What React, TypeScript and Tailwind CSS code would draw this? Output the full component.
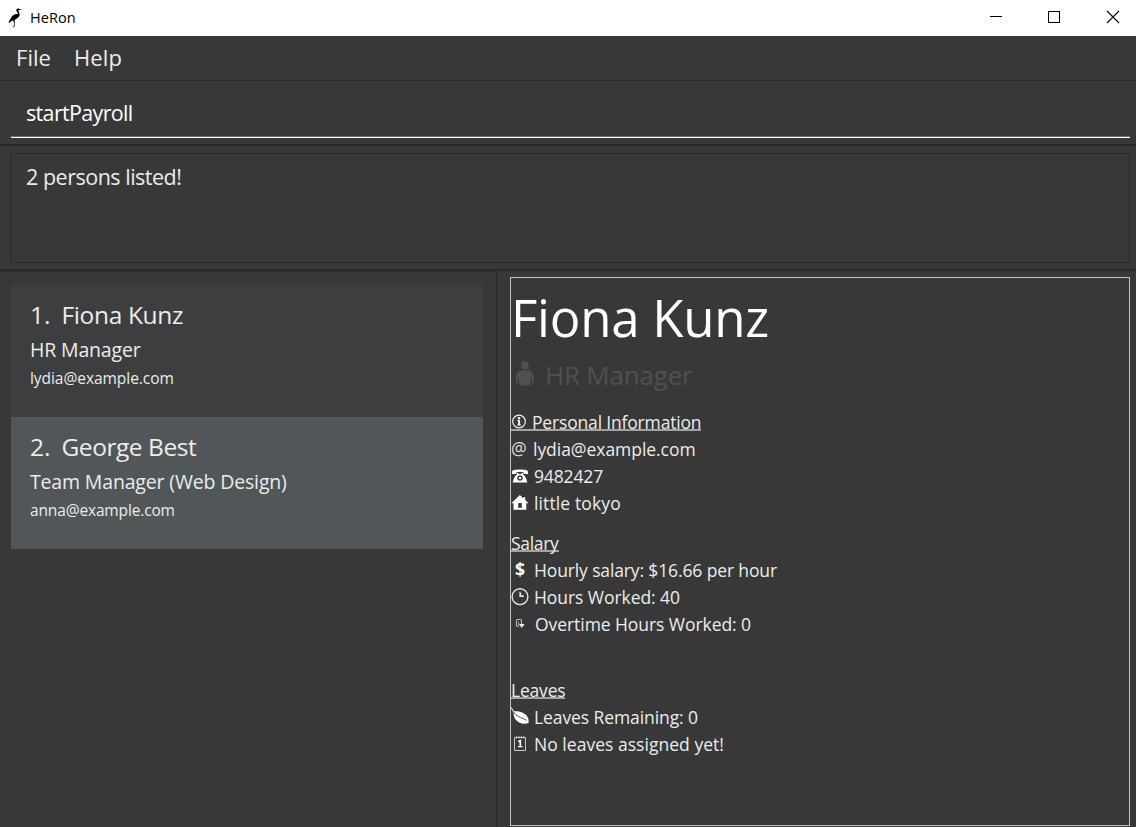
import type { ReactNode } from "react";

function HeronLogo() {
  return (
    <svg width="15" height="20" viewBox="0 0 15 20" className="shrink-0">
      <path
        d="M8.3 2.1 C8.6 0.6 10.4 0.2 11.4 1 L14.2 1.9 L11.3 2.1 C10.2 2.2 10.3 3.2 10.9 4.2 C11.9 6 11.9 7.6 10.6 9 C9.3 10.4 7.6 11.4 6.4 12 L3.6 13 L0.6 15.2 L0.9 13.4 L2.4 11 C3.5 8.6 5.2 6.6 7.6 6 C9 5.7 9.8 6.4 9.9 5.6 C10 4.6 8 3.8 8.3 2.1 Z"
        fill="#000"
      />
      <path d="M6.6 11.4 L6.3 18.6 M6.2 18.6 L4.6 18.9 M5.2 11.8 L6.4 14.4" stroke="#222" strokeWidth="0.9" fill="none" />
    </svg>
  );
}

function PersonIcon() {
  return (
    <svg width="20" height="26" viewBox="0 0 20 26" fill="#505050" className="shrink-0">
      <circle cx="10" cy="4.5" r="3.9" />
      <path d="M5.6 9.6 H14.2 C17.4 10 18.9 13.5 19.2 20.6 Q19 22.6 17.3 22.2 L16.2 17 L15.8 23 Q15.6 24.6 14 24.6 H6 Q4.4 24.6 4.2 23 L3.6 17 L2.6 22.2 Q0.8 22.6 0.7 20.6 C1 13.5 2.4 10 5.6 9.6 Z" />
      <path d="M3.7 16.2 L3.3 22.5 M16.2 16.2 L16.6 22.5" stroke="#383838" strokeWidth="0.8" />
    </svg>
  );
}

function InfoIcon() {
  return (
    <svg width="18" height="18" viewBox="0 0 18 18" fill="none" stroke="#f0f0f0">
      <circle cx="8" cy="8.500" r="6.300" strokeWidth="1.200" />
      <circle cx="8" cy="5.200" r="1.250" fill="#fff" stroke="none" />
      <path d="M6.400 7.600 H8.300 M6.200 12 H10" strokeWidth="1.200" />
      <path d="M8.100 7.100 V12.200" strokeWidth="2" />
    </svg>
  );
}

function PhoneIcon() {
  return (
    <svg width="18" height="18" viewBox="0 0 18 18" fill="#fff">
      <path d="M1 7 V4.800 C1.200 3.200 3.400 2.500 9 2.500 C14.600 2.500 16.800 3.200 17 4.800 V7 H12.600 V5.200 C11 4.800 7 4.800 5.400 5.200 V7 Z" />
      <path d="M6 6 H7.500 V7 H10.500 V6 H12 V7.400 C13.600 8.300 15.500 11.100 16.300 15.400 H1.700 C2.500 11.100 4.400 8.300 6 7.400 Z" />
      <circle cx="9" cy="11" r="2.700" fill="#383838" />
      <circle cx="9" cy="11" r="1.200" />
    </svg>
  );
}

function HouseIcon() {
  return (
    <svg width="18" height="18" viewBox="0 0 18 18" fill="#fff">
      <path d="M8.900 0.900 L12.500 4.400 V2.900 H14.200 V6 L17.600 9.300 H15.300 V15.800 H2.500 V9.300 H0.300 Z" />
      <rect x="7.200" y="9.100" width="3.600" height="4.700" fill="#383838" />
    </svg>
  );
}

function ClockIcon() {
  return (
    <svg width="19" height="18" viewBox="0 0 19 18" fill="none" stroke="#e6e6e6" strokeWidth="1.400">
      <circle cx="9" cy="8.700" r="7.900" />
      <path d="M9 3.800 V8.500 H12.800" strokeWidth="1.200" />
      <path d="M9 8.500 V5 L10.300 5 L10 7.600 L12.500 7 V8.500 Z" fill="#e6e6e6" stroke="none" />
    </svg>
  );
}

function LoopIcon() {
  return (
    <svg width="18" height="18" viewBox="0 0 18 18" fill="none" stroke="#b8b8b8">
      <path d="M5.500 11.500 V5.500 Q5.500 4.500 6.500 4.500 H9.500 Q10.500 4.500 10.500 5.500 V10" strokeWidth="1.100" />
      <path d="M5.500 11.400 H7.700 V6.800" strokeWidth="0.800" />
      <path d="M8 9 H13.600 L10.800 13 Z" fill="#f0f0f0" stroke="none" />
    </svg>
  );
}

function LeafIcon() {
  return (
    <svg width="19" height="19" viewBox="0 0 19 19">
      <path d="M2.800 4.300 C7 3.700 13.500 5 16.300 9.500 C17.600 11.700 18 14.400 17.400 16 C13.500 17.400 7.500 16.600 4.500 12.500 C2.700 10 2.300 7 2.800 4.300 Z" fill="#fff" />
      <path d="M0 0.500 L2.800 5 C5 9 9.500 10.300 15.500 13.300" fill="none" stroke="#383838" strokeWidth="0.900" />
      <path d="M0 0.500 L3.200 5.300" stroke="#d8d8d8" strokeWidth="1.200" />
    </svg>
  );
}

function CalendarIcon() {
  return (
    <svg width="18" height="19" viewBox="0 0 18 19" fill="none" stroke="#c9c9c9" strokeWidth="1">
      <path d="M3.500 3.500 H14.500 V16.500 H3.500 Z" />
      <path d="M5.500 2 V4.500 M8 2 V4.500 M10.500 2 V4.500 M13 2 V4.500" strokeWidth="0.900" />
      <path d="M7.300 7.600 L9.300 6.800 V12.600" stroke="#fff" strokeWidth="1.700" />
      <path d="M6.800 12.700 H11.600" stroke="#fff" strokeWidth="1.200" />
    </svg>
  );
}

function Row({ icon, children }: { icon: ReactNode; children: ReactNode }) {
  return (
    <div className="flex h-[27px] items-center leading-[27px]">
      <span className="flex w-[23px] shrink-0 items-center">{icon}</span>
      <span className="mt-px h-[26px]">{children}</span>
    </div>
  );
}

function Heading({ children }: { children: ReactNode }) {
  return (
    <h2 className="mb-1 flex h-[23px] w-fit items-start border-b-2 border-[#a2a2a2] leading-[29px]">{children}</h2>
  );
}

type Person = { index: string; name: ReactNode; role: ReactNode; email: ReactNode; bg: string };

const people: Person[] = [
  {
    index: "1.",
    name: <span className="tracking-[-0.36px]">Fiona Kunz</span>,
    role: <span className="tracking-[-0.16px]">HR Manager</span>,
    email: <span className="tracking-[-0.05px]">lydia@example.com</span>,
    bg: "bg-[#3c3e3f]",
  },
  {
    index: "2.",
    name: <span className="tracking-[-0.46px]">George Best</span>,
    role: <span className="tracking-[-0.16px]">Team Manager (Web Design)</span>,
    email: <span className="tracking-[-0.15px]">anna@example.com</span>,
    bg: "bg-[#515658]",
  },
];

export default function App() {
  return (
    <div className="flex h-[827px] w-[1136px] flex-col overflow-hidden bg-[#383838] font-['Open_Sans','Liberation_Sans',sans-serif] whitespace-nowrap text-[#ececec]">
      <header className="flex h-9 shrink-0 items-center bg-white pl-2 text-black">
        <HeronLogo />
        <span className="ml-[7px] flex-1 text-[14.5px] leading-9 tracking-[0.05px]">HeRon</span>
        <svg width="146" height="36" viewBox="0 0 146 36" fill="none" stroke="#000" strokeWidth="1" shapeRendering="crispEdges">
          <path d="M0 16.5 H12" />
          <rect x="58.500" y="11.500" width="11" height="11" />
          <path d="M117 11 L129 23 M129 11 L117 23" shapeRendering="auto" strokeWidth="1.100" />
        </svg>
      </header>

      <nav className="flex h-[45px] shrink-0 border-b border-[#2a2a2a] pl-4 text-[22px] leading-[42px]">
        <span className="w-[58px] tracking-[0.05px]">File</span>
        <span className="tracking-[0.1px]">Help</span>
      </nav>

      <div className="h-[65px] shrink-0 border-b-2 border-[#2a2a2a] pt-1 pr-[6px] pl-[11px]">
        <div className="h-[53px] border-b border-white">
          <div className="h-[52px] border-b border-[#6c6c6c] pl-[15px] text-[21.5px] leading-[55px] tracking-[-0.66px] text-white">
            startPayroll
          </div>
        </div>
      </div>

      <div className="h-[125px] shrink-0 border-b-2 border-[#2a2a2a] pt-[7px] pr-[6px] pl-[10px]">
        <div className="h-[110px] border border-[#2a2a2a] pt-[7px] pl-[15px] text-[21.5px] leading-8 tracking-[-0.49px]">
          2 persons listed!
        </div>
      </div>

      <main className="flex min-h-0 flex-1">
        <section className="w-[497px] shrink-0 border-t border-r border-[#2a2a2a] pt-[13px] pl-[11px]">
          {people.map((p) => (
            <article key={p.index} className={`h-[132px] w-[472px] pt-[14px] pl-[19px] ${p.bg}`}>
              <div className="flex text-[24.5px] leading-8">
                <span className="w-[31.500px]">{p.index}</span>
                {p.name}
              </div>
              <div className="mt-[5px] text-[19.5px] leading-7">{p.role}</div>
              <div className="mt-[2px] text-[15.5px] leading-6">{p.email}</div>
            </article>
          ))}
        </section>

        <section className="flex-1 pt-[6px] pr-[6px] pl-[13px]">
          <div className="h-[549px] border border-[#c4c4c4] text-[17.5px]">
            <h1 className="pt-[7px] text-[51px] leading-[64px] tracking-[-0.25px] text-white">Fiona Kunz</h1>
            <div className="mt-[8px] flex h-9 items-center pl-1 text-[26px] leading-9 tracking-[-0.21px] text-[#505050]">
              <span className="-mt-[3px]">
                <PersonIcon />
              </span>
              <span className="ml-[10px]">HR Manager</span>
            </div>

            <div className="mt-[15px]">
              <Heading>
                <span className="flex h-[27px] w-[21px] items-center">
                  <InfoIcon />
                </span>
                <span className="tracking-[-0.17px]">Personal Information</span>
              </Heading>
              <Row icon={<span className="text-[17.5px] text-[#dcdcdc]">@</span>}>
                <span className="-ml-px tracking-[-0.04px]">lydia@example.com</span>
              </Row>
              <Row icon={<PhoneIcon />}>
                <span className="tracking-[-0.15px]">9482427</span>
              </Row>
              <Row icon={<HouseIcon />}>
                <span className="tracking-[0.12px]">little tokyo</span>
              </Row>
            </div>

            <div className="mt-[13px]">
              <Heading>
                <span className="tracking-[-0.3px]">Salary</span>
              </Heading>
              <Row icon={<span className="ml-1 text-[17.5px] font-bold text-white">$</span>}>
                <span className="tracking-[-0.13px]">Hourly salary: $16.66 per hour</span>
              </Row>
              <Row icon={<ClockIcon />}>
                <span className="tracking-[-0.06px]">Hours Worked: 40</span>
              </Row>
              <Row icon={<LoopIcon />}>
                <span className="ml-px tracking-[-0.06px]">Overtime Hours Worked: 0</span>
              </Row>
            </div>

            <div className="mt-[39px]">
              <Heading>
                <span className="tracking-[-0.2px]">Leaves</span>
              </Heading>
              <Row icon={<LeafIcon />}>
                <span className="tracking-[-0.09px]">Leaves Remaining: 0</span>
              </Row>
              <Row icon={<CalendarIcon />}>
                <span className="tracking-[0.03px]">No leaves assigned yet!</span>
              </Row>
            </div>
          </div>
        </section>
      </main>
    </div>
  );
}
